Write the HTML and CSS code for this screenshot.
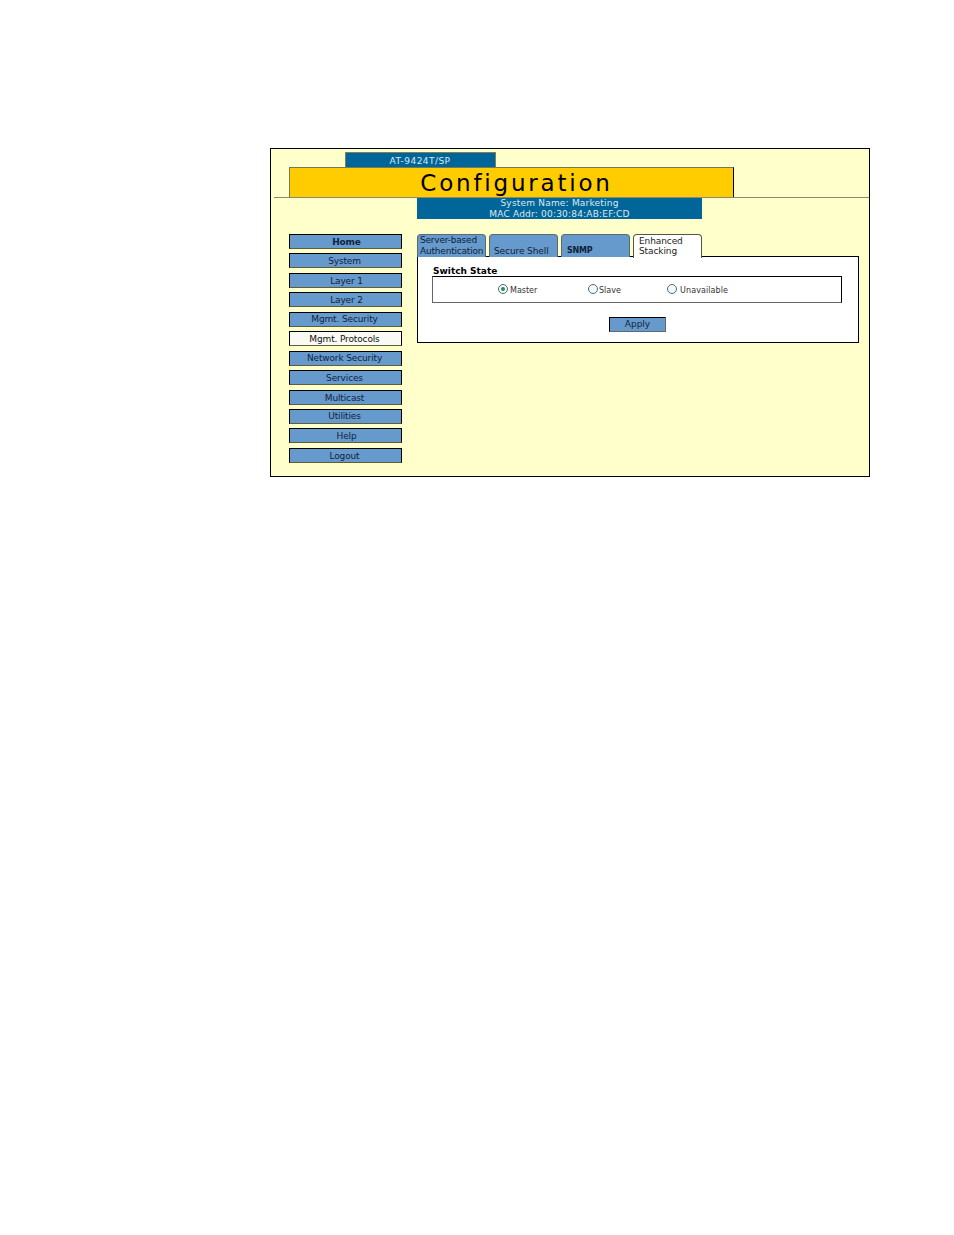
FILE: index.html
```html
<!DOCTYPE html>
<html lang="en">
<head>
<meta charset="utf-8">
<title>Configuration</title>
<link rel="stylesheet" href="styles.css">
</head>
<body>
<div class="frame">
  <div class="model">AT-9424T/SP</div>
  <h1 class="title">Configuration</h1>
  <div class="rule"></div>
  <div class="sysinfo">System Name: Marketing<br>MAC Addr: 00:30:84:AB:EF:CD</div>
  <div class="main">
    <nav class="nav">
      <a class="nav-item nudge-2 strong">Home</a>
      <a class="nav-item">System</a>
      <a class="nav-item nudge-2">Layer 1</a>
      <a class="nav-item nudge-2">Layer 2</a>
      <a class="nav-item raise">Mgmt. Security</a>
      <a class="nav-item current">Mgmt. Protocols</a>
      <a class="nav-item raise">Network Security</a>
      <a class="nav-item">Services</a>
      <a class="nav-item">Multicast</a>
      <a class="nav-item raise">Utilities</a>
      <a class="nav-item nudge-2">Help</a>
      <a class="nav-item">Logout</a>
    </nav>
    <section class="content">
      <div class="tabs">
        <div class="tab tab-tight">Server-based<br>Authentication</div>
        <div class="tab tab-low">Secure Shell</div>
        <div class="tab tab-snmp">SNMP</div>
        <div class="tab tab-active">Enhanced<br>Stacking</div>
      </div>
      <div class="panel">
        <div class="legend">Switch State</div>
        <div class="options">
          <label class="opt opt-master"><span class="radio on"></span>Master</label>
          <label class="opt opt-slave"><span class="radio"></span>Slave</label>
          <label class="opt opt-last"><span class="radio"></span>Unavailable</label>
        </div>
        <div class="actions"><button class="apply" type="button">Apply</button></div>
      </div>
    </section>
  </div>
</div>
</body>
</html>
```
FILE: styles.css
```css
* { box-sizing: border-box; }
html, body { margin: 0; padding: 0; background: #fff; }
body { width: 954px; height: 1235px; overflow: hidden; padding: 148px 0 0 270px; font-family: "DejaVu Sans", Verdana, sans-serif; }

.frame { width: 600px; height: 329px; background: #ffffcc; border: 1px solid #000; padding-top: 3px; }

.model { width: 151px; height: 15px; margin-left: 74px; background: #006699; color: #dfe8ee; border: 1px solid #807f5c; border-bottom: 0; font-size: 9px; line-height: 16px; text-align: center; padding-right: 1px; letter-spacing: 0.45px; }

.title { width: 445px; height: 30px; margin: 0 0 0 18px; background: #ffcc00; border: 1px solid #000; border-top-color: #77775a; border-left-color: #77775a; border-bottom: 0; color: #000; font-size: 23px; font-weight: 400; line-height: 30px; letter-spacing: 2.8px; text-align: center; padding-left: 10px; }

.rule { height: 1px; margin-left: 3px; background: #8a8a70; }

.sysinfo { width: 285px; height: 21px; margin-left: 146px; background: #006699; color: #dfe8ee; font-size: 9px; line-height: 10.5px; text-align: center; letter-spacing: 0.2px; }

.main { display: flex; margin: 15px 0 0 18px; }

.nav { width: 113px; display: flex; flex-direction: column; gap: 4.45px; margin-right: 15px; }
.nav-item { display: block; height: 15px; background: #6699cc; border: 1px solid #000; border-bottom-color: #5d5f3a; color: #10243c; font-size: 9px; line-height: 14px; text-align: center; padding-right: 2px; letter-spacing: -0.14px; }
.raise { line-height: 13px; }
.nudge-2 { padding-left: 2px; padding-right: 0; }
.strong { font-weight: 700; }
.current { background: #fafaf5; color: #111; }

.content { width: 442px; }

.tabs { display: flex; gap: 3px; height: 23px; position: relative; z-index: 1; }
.tab { width: 69px; height: 23px; background: #6699cc; border: 1px solid #5c6a70; border-bottom: 0; border-radius: 4px 4px 0 0; color: #0e2238; font-size: 9px; line-height: 11px; padding: 0 0 0 2px; white-space: nowrap; letter-spacing: -0.2px; }
.tab-low { padding: 11px 0 0 4px; letter-spacing: -0.1px; }
.tab-snmp { padding: 10px 0 0 5px; font-weight: 700; font-size: 8px; }
.tab-active { background: #fff; padding: 1px 0 0 5px; height: 24px; border-color: #55554a; color: #222; letter-spacing: -0.1px; line-height: 10px; }

.panel { width: 442px; height: 87px; margin-top: -1px; background: #fff; border: 1px solid #000; padding: 8px 0 0 14px; }
.legend { font-size: 9px; font-weight: 700; height: 11px; line-height: 12px; color: #000; padding-left: 1px; }
.options { width: 410px; height: 27px; border: 1px solid #000; border-bottom-color: #666; border-left-color: #666; display: flex; align-items: flex-start; padding: 7px 0 0 65px; font-size: 8px; line-height: 14px; color: #333; }
.opt { display: flex; align-items: flex-start; gap: 2px; }
.opt-master { width: 90px; }
.opt-slave { width: 79px; gap: 1px; }
.opt-last { letter-spacing: 0.1px; gap: 3px; }
.radio { width: 10px; height: 10px; border-radius: 50%; border: 1px solid #4a6a88; background: #f4f8fb; display: flex; align-items: center; justify-content: center; }
.radio.on::after { content: ""; width: 4px; height: 4px; border-radius: 50%; background: #2f8a55; }

.actions { margin: 14px 0 0 177px; }
.apply { display: block; width: 57px; height: 15px; padding: 0 0 2px; background: #6699cc; border: 1px solid #000; border-right-color: #5c6a70; border-bottom-color: #5c6a70; color: #10243c; font-family: inherit; font-size: 9px; line-height: 12px; text-align: center; }
```
